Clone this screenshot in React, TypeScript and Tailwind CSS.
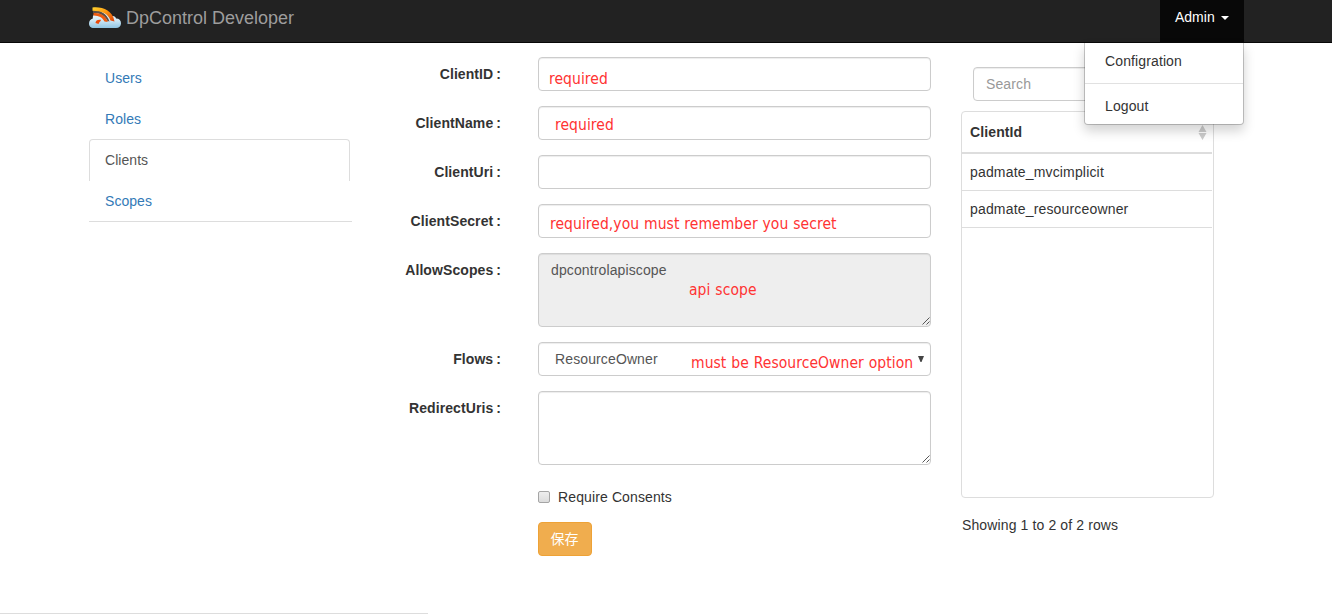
import type { ReactNode } from 'react';

const fieldBox =
  'relative w-[393px] rounded border border-[#ccc] shadow-[inset_0_1px_1px_rgba(0,0,0,0.075)]';

function Note({ className, children }: { className: string; children: ReactNode }) {
  return (
    <span
      className={`absolute whitespace-nowrap font-['DejaVu_Sans_Condensed','DejaVu_Sans',sans-serif] [font-stretch:condensed] text-[15.5px] leading-5 tracking-[0.06px] [word-spacing:0.4px] text-[#ff3333] ${className}`}
    >
      {children}
    </span>
  );
}

function Row({ label, children }: { label: string; children: ReactNode }) {
  return (
    <div className="flex">
      <div className="w-[119px] pt-[7px] text-right font-bold tracking-[0.08px] whitespace-nowrap">
        {label}
        <span className="ml-[3px]">:</span>
      </div>
      <div className="ml-[37px]">{children}</div>
    </div>
  );
}

function Grip() {
  return (
    <svg className="absolute right-0 bottom-px h-[8px] w-[8px]" viewBox="0 0 8 8">
      <path d="M0.500 7.500L7.500 0.500M4.500 7.500L7.500 4.500" stroke="#444" strokeWidth="0.9" fill="none" />
    </svg>
  );
}

function Logo() {
  return (
    <svg className="h-[22px] w-8" viewBox="0 0 32 22">
      <defs>
        <linearGradient id="cloud" x1="0" y1="0" x2="0" y2="1">
          <stop offset="0" stopColor="#ffffff" />
          <stop offset="0.5" stopColor="#d3eaf6" />
          <stop offset="1" stopColor="#8fc4e2" />
        </linearGradient>
        <linearGradient id="arc" x1="0" y1="0" x2="1" y2="1">
          <stop offset="0" stopColor="#ffd52e" />
          <stop offset="0.45" stopColor="#ff9a12" />
          <stop offset="1" stopColor="#dc3c08" />
        </linearGradient>
      </defs>
      <path
        d="M5 21C1.500 21 0 19 0 16.500C0 14 1.500 12 3.800 11.500C3.500 8.500 5 6.500 8 6C12 3 20 4 22.500 9C25 8.500 27 10 27 11.600C30 11.500 32 13.500 32 16.300C32 19.200 30 21 27 21Z"
        fill="url(#cloud)"
      />
      <path d="M4 3.500C12 3.500 18 6.500 20.500 14.500L18.500 14C16 9 12 6 4 6Z" fill="#5b5048" />
      <path d="M3.500 0.500C13 -0.500 23.500 3 25.500 14.500L21.500 13.500C19 6.500 12.500 3.700 3.500 3.700Z" fill="url(#arc)" />
      <path d="M4.500 6C11 5.500 17 8.500 18.800 15L15.500 14.500C13 10.200 10.500 9 4.500 8.600Z" fill="#ec5a10" />
      <path d="M6.500 16C6.500 13.300 9 12.200 12 12.800C11.800 14.800 10 14.800 9.500 17Z" fill="#ea4b0b" />
    </svg>
  );
}

const links = ['Users', 'Roles', 'Clients', 'Scopes'];
const clients = ['padmate_mvcimplicit', 'padmate_resourceowner'];

export default function App() {
  return (
    <div className="relative h-[614px] w-[1332px] overflow-hidden bg-white font-['Liberation_Sans',Arial,sans-serif] text-[14px] leading-5 tracking-[0.12px] text-[#333]">
      <header className="flex h-[43px] justify-between border-b border-[#080808] bg-[#222] pr-[88px] pl-[89px]">
        <div className="flex items-start pt-[7px]">
          <Logo />
          <span className="ml-[5px] text-[18px] leading-[22px] tracking-normal text-[#9d9d9d]">DpControl Developer</span>
        </div>
        <div className="relative flex w-[84px] items-start bg-[#080808] pt-[7px] pl-[15px] tracking-normal text-white">
          Admin
          <span className="mt-[9px] ml-[6px] border-x-4 border-t-4 border-x-transparent border-t-white" />
          <div className="absolute top-[43px] right-0 z-10 h-[82px] w-[160px] rounded-b border border-t-0 border-black/20 bg-white bg-clip-padding tracking-[0.12px] text-[#333] shadow-[0_6px_12px_rgba(0,0,0,0.175)]">
            <div className="h-[41px] border-b border-[#e1e1e1] pt-[8px] pl-5">Configration</div>
            <div className="pt-[12px] pl-5">Logout</div>
          </div>
        </div>
      </header>

      <main className="flex pl-[89px]">
        <nav className="mt-[15px] h-[164px] w-[263px] border-b border-[#ddd] tracking-[0.05px] text-[#337ab7]">
          {links.map((link) => (
            <div
              key={link}
              className={
                link === 'Clients'
                  ? '-mt-px h-[42px] w-[261px] rounded-t border border-b-0 border-[#ddd] pt-[10px] pl-[15px] text-[#555]'
                  : 'h-[41px] pt-[10px] pl-4'
              }
            >
              {link}
            </div>
          ))}
        </nav>

        <form className="mt-[14px] ml-[30px] flex w-[549px] flex-col gap-[15px]">
          <Row label="ClientID">
            <div className={`${fieldBox} h-[34px]`}>
              <Note className="top-[11px] left-[10px]">required</Note>
            </div>
          </Row>
          <Row label="ClientName">
            <div className={`${fieldBox} h-[34px]`}>
              <Note className="top-[8px] left-[16px]">required</Note>
            </div>
          </Row>
          <Row label="ClientUri">
            <div className={`${fieldBox} h-[34px]`} />
          </Row>
          <Row label="ClientSecret">
            <div className={`${fieldBox} h-[34px]`}>
              <Note className="top-[9px] left-[11px]">required,you must remember you secret</Note>
            </div>
          </Row>
          <Row label="AllowScopes">
            <div className={`${fieldBox} h-[74px] bg-[#eee] px-3 py-[6px] text-[#555]`}>
              dpcontrolapiscope
              <Note className="top-[26px] left-[150px]">api scope</Note>
              <Grip />
            </div>
          </Row>
          <Row label="Flows">
            <div className={`${fieldBox} h-[34px] px-4 py-[6px] text-[#555]`}>
              ResourceOwner
              <Note className="top-[10px] left-[152px]">must be ResourceOwner option</Note>
              <svg className="absolute top-[13px] right-[6px] h-[6px] w-[6px]" viewBox="0 0 6 6">
                <path d="M0 0H6L3.500 6H2.500Z" fill="#444" />
              </svg>
            </div>
          </Row>
          <Row label="RedirectUris">
            <div className={`${fieldBox} h-[74px]`}>
              <Grip />
            </div>
          </Row>
          <div className="mt-[7px] ml-[156px]">
            <div className="flex items-center">
              <span className="h-3 w-3 rounded-[2px] border border-[#a5a5a5] bg-linear-to-b from-[#eee] to-[#dcdcdc]" />
              <span className="ml-2">Require Consents</span>
            </div>
            <button
              type="button"
              className="mt-[15px] flex h-[34px] w-[54px] justify-center rounded border border-[#eea236] bg-[#f0ad4e] pt-[5px] pr-px font-['Noto_Sans_CJK_SC',sans-serif] text-[14px] tracking-normal text-white"
            >
              保存
            </button>
          </div>
        </form>

        <aside className="mt-[24px] ml-[30px] w-[253px]">
          <div className="ml-3 h-[34px] w-[229px] rounded border border-[#ccc] px-3 py-[6px] text-[#999] shadow-[inset_0_1px_1px_rgba(0,0,0,0.075)]">
            Search
          </div>
          <div className="mt-[10px] h-[387px] rounded border border-[#ddd] pr-px">
            <div className="flex h-[42px] items-center justify-between border-b-2 border-[#ddd] pr-[5px] pl-2 font-bold">
              <span>ClientId</span>
              <svg className="h-[15px] w-[9px]" viewBox="0 0 9 15">
                <path d="M0.500 7L4.500 0L8.500 7ZM0.500 8H8.500L4.500 15Z" fill="#ccc" />
              </svg>
            </div>
            {clients.map((client) => (
              <div key={client} className="h-[37px] border-b border-[#ddd] pt-2 pl-2 tracking-[0.17px]">
                {client}
              </div>
            ))}
          </div>
          <div className="mt-[17px] pl-px">Showing 1 to 2 of 2 rows</div>
        </aside>
      </main>

      <div className="absolute bottom-0 left-0 h-px w-[428px] bg-[#ddd]" />
    </div>
  );
}
